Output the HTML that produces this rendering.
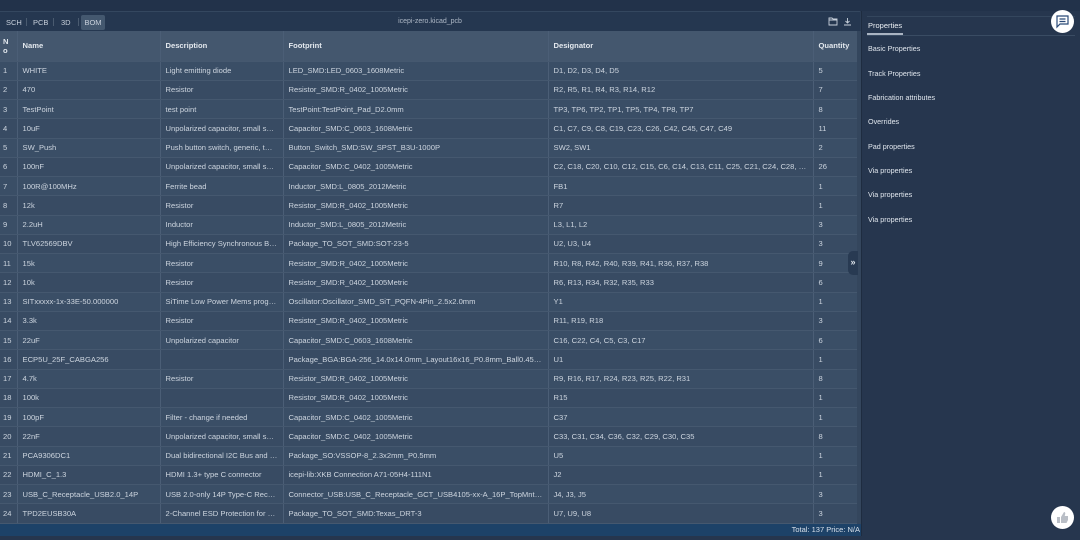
<!DOCTYPE html>
<html><head><meta charset="utf-8"><style>
*{margin:0;padding:0;box-sizing:border-box}
body{width:1080px;height:540px;background:#26364e;font-family:"Liberation Sans",sans-serif;overflow:hidden;position:relative;color:#c9d1dc}
#main{position:absolute;left:0;top:11px;width:862px;height:525px;background:#2b3c54;border-right:1px solid #1e2c40;overflow:hidden}
#tb{position:absolute;left:0;top:0;width:860px;height:20px;background:#253750;border-top:1px solid #34475f}
.tab{position:absolute;top:3px;height:15px;font-size:7.5px;line-height:15px;color:#c9d1dc}
#title{position:absolute;left:0;width:860px;top:0;text-align:center;font-size:7px;line-height:20px;color:#aeb8c6}
#tw{position:absolute;left:0;top:20px;width:857px;height:493px;overflow:hidden;background:#384b63}
table{border-collapse:collapse;table-layout:fixed;width:857px}
td,th{font-size:7.6px;color:#cdd5df;padding:0 5px;height:19.25px;white-space:nowrap;overflow:hidden;text-overflow:ellipsis;border-right:1px solid #4b5e76;border-bottom:1px solid #45586f;text-align:left}
th{height:30px;background:#44576e;font-weight:bold;color:#e3e8ee;font-size:7.6px}
td:first-child,th:first-child{padding:0 3px}
tr:nth-child(odd) td{background:#384b63}
tr:nth-child(even) td{background:#3a4e66}
#sb{position:absolute;left:857px;top:20px;width:4px;height:493px;background:#34465d}
#foot{position:absolute;left:0;top:513px;width:862px;height:12px;background:#1d4268;font-size:7.5px;color:#d8e0ea;text-align:right;padding-right:2px;line-height:12px}
#right{position:absolute;left:862px;top:11px;width:218px}
.pi{position:absolute;left:6px;font-size:7.2px;color:#e1e7ee}
</style></head><body>
<div style="position:absolute;left:0;top:0;width:1080px;height:11px;background:#22324a"></div>
<div id="main">
<div id="tb">
<span class="tab" style="left:6px">SCH</span>
<span style="position:absolute;left:26px;top:6px;width:1px;height:8px;background:#4a5b70"></span>
<span class="tab" style="left:33px">PCB</span>
<span style="position:absolute;left:53px;top:6px;width:1px;height:8px;background:#4a5b70"></span>
<span class="tab" style="left:61px">3D</span>
<span style="position:absolute;left:78px;top:6px;width:1px;height:8px;background:#4a5b70"></span>
<span class="tab" style="left:81px;width:24px;background:#44586f;border-radius:2px;text-align:center">BOM</span>
<div id="title">icepi-zero.kicad_pcb</div>
<svg style="position:absolute;left:828px;top:5px" width="10" height="9" viewBox="0 0 10 9"><path d="M1 1h3l1 1h4v6H1z M1 3h8" fill="none" stroke="#c9d1dc" stroke-width="0.9"/></svg>
<svg style="position:absolute;left:843px;top:5px" width="9" height="9" viewBox="0 0 9 9"><path d="M4.5 1v5M2.5 4l2 2 2-2M1 8h7" fill="none" stroke="#c9d1dc" stroke-width="0.9"/></svg>
</div>
<div id="tw">
<table>
<colgroup><col style="width:17px"><col style="width:143px"><col style="width:123px"><col style="width:265px"><col style="width:265px"><col style="width:44px"></colgroup>
<tr><th style="line-height:9px">N<br>o</th><th>Name</th><th>Description</th><th>Footprint</th><th>Designator</th><th>Quantity</th></tr>
<tr><td>1</td><td>WHITE</td><td>Light emitting diode</td><td>LED_SMD:LED_0603_1608Metric</td><td>D1, D2, D3, D4, D5</td><td>5</td></tr>
<tr><td>2</td><td>470</td><td>Resistor</td><td>Resistor_SMD:R_0402_1005Metric</td><td>R2, R5, R1, R4, R3, R14, R12</td><td>7</td></tr>
<tr><td>3</td><td>TestPoint</td><td>test point</td><td>TestPoint:TestPoint_Pad_D2.0mm</td><td>TP3, TP6, TP2, TP1, TP5, TP4, TP8, TP7</td><td>8</td></tr>
<tr><td>4</td><td>10uF</td><td>Unpolarized capacitor, small symbol</td><td>Capacitor_SMD:C_0603_1608Metric</td><td>C1, C7, C9, C8, C19, C23, C26, C42, C45, C47, C49</td><td>11</td></tr>
<tr><td>5</td><td>SW_Push</td><td>Push button switch, generic, two pins</td><td>Button_Switch_SMD:SW_SPST_B3U-1000P</td><td>SW2, SW1</td><td>2</td></tr>
<tr><td>6</td><td>100nF</td><td>Unpolarized capacitor, small symbol</td><td>Capacitor_SMD:C_0402_1005Metric</td><td>C2, C18, C20, C10, C12, C15, C6, C14, C13, C11, C25, C21, C24, C28, C27, C38, C40</td><td>26</td></tr>
<tr><td>7</td><td>100R@100MHz</td><td>Ferrite bead</td><td>Inductor_SMD:L_0805_2012Metric</td><td>FB1</td><td>1</td></tr>
<tr><td>8</td><td>12k</td><td>Resistor</td><td>Resistor_SMD:R_0402_1005Metric</td><td>R7</td><td>1</td></tr>
<tr><td>9</td><td>2.2uH</td><td>Inductor</td><td>Inductor_SMD:L_0805_2012Metric</td><td>L3, L1, L2</td><td>3</td></tr>
<tr><td>10</td><td>TLV62569DBV</td><td>High Efficiency Synchronous Buck Converter</td><td>Package_TO_SOT_SMD:SOT-23-5</td><td>U2, U3, U4</td><td>3</td></tr>
<tr><td>11</td><td>15k</td><td>Resistor</td><td>Resistor_SMD:R_0402_1005Metric</td><td>R10, R8, R42, R40, R39, R41, R36, R37, R38</td><td>9</td></tr>
<tr><td>12</td><td>10k</td><td>Resistor</td><td>Resistor_SMD:R_0402_1005Metric</td><td>R6, R13, R34, R32, R35, R33</td><td>6</td></tr>
<tr><td>13</td><td>SITxxxxx-1x-33E-50.000000</td><td>SiTime Low Power Mems programmable</td><td>Oscillator:Oscillator_SMD_SiT_PQFN-4Pin_2.5x2.0mm</td><td>Y1</td><td>1</td></tr>
<tr><td>14</td><td>3.3k</td><td>Resistor</td><td>Resistor_SMD:R_0402_1005Metric</td><td>R11, R19, R18</td><td>3</td></tr>
<tr><td>15</td><td>22uF</td><td>Unpolarized capacitor</td><td>Capacitor_SMD:C_0603_1608Metric</td><td>C16, C22, C4, C5, C3, C17</td><td>6</td></tr>
<tr><td>16</td><td>ECP5U_25F_CABGA256</td><td></td><td>Package_BGA:BGA-256_14.0x14.0mm_Layout16x16_P0.8mm_Ball0.45mm_Pad0.32mm</td><td>U1</td><td>1</td></tr>
<tr><td>17</td><td>4.7k</td><td>Resistor</td><td>Resistor_SMD:R_0402_1005Metric</td><td>R9, R16, R17, R24, R23, R25, R22, R31</td><td>8</td></tr>
<tr><td>18</td><td>100k</td><td></td><td>Resistor_SMD:R_0402_1005Metric</td><td>R15</td><td>1</td></tr>
<tr><td>19</td><td>100pF</td><td>Filter - change if needed</td><td>Capacitor_SMD:C_0402_1005Metric</td><td>C37</td><td>1</td></tr>
<tr><td>20</td><td>22nF</td><td>Unpolarized capacitor, small symbol</td><td>Capacitor_SMD:C_0402_1005Metric</td><td>C33, C31, C34, C36, C32, C29, C30, C35</td><td>8</td></tr>
<tr><td>21</td><td>PCA9306DC1</td><td>Dual bidirectional I2C Bus and SMBus</td><td>Package_SO:VSSOP-8_2.3x2mm_P0.5mm</td><td>U5</td><td>1</td></tr>
<tr><td>22</td><td>HDMI_C_1.3</td><td>HDMI 1.3+ type C connector</td><td>icepi-lib:XKB Connection A71-05H4-111N1</td><td>J2</td><td>1</td></tr>
<tr><td>23</td><td>USB_C_Receptacle_USB2.0_14P</td><td>USB 2.0-only 14P Type-C Receptacle</td><td>Connector_USB:USB_C_Receptacle_GCT_USB4105-xx-A_16P_TopMnt_Horizontal</td><td>J4, J3, J5</td><td>3</td></tr>
<tr><td>24</td><td>TPD2EUSB30A</td><td>2-Channel ESD Protection for SuperSpeed</td><td>Package_TO_SOT_SMD:Texas_DRT-3</td><td>U7, U9, U8</td><td>3</td></tr>
<tr><td></td><td></td><td></td><td></td><td></td><td></td></tr>
</table>
</div>
<div id="sb"></div>
<div style="position:absolute;left:848px;top:240px;width:10px;height:24px;background:#283a52;border-radius:5px 0 0 5px;color:#dfe5ec;font-size:9px;line-height:22px;text-align:center;font-weight:bold">»</div>
<div id="foot">Total: 137 Price: N/A</div>
</div>
<div id="right">
<div style="position:absolute;left:5px;top:5px;width:208px;height:1px;background:#34465d"></div>
<div class="pi" style="top:10px;font-size:7.5px;color:#eef2f6">Properties</div>
<div style="position:absolute;left:5px;top:22px;width:36px;height:2px;background:#aab4c2"></div>
<div style="position:absolute;left:5px;top:24px;width:208px;height:1px;background:#3a4c63"></div>
<div class="pi" style="top:33px">Basic Properties</div>
<div class="pi" style="top:58px">Track Properties</div>
<div class="pi" style="top:82px">Fabrication attributes</div>
<div class="pi" style="top:106px">Overrides</div>
<div class="pi" style="top:131px">Pad properties</div>
<div class="pi" style="top:155px">Via properties</div>
<div class="pi" style="top:179px">Via properties</div>
<div class="pi" style="top:204px">Via properties</div>
</div>
<div style="position:absolute;left:1051px;top:10px;width:23px;height:23px;border-radius:50%;background:#fff"></div>
<svg style="position:absolute;left:1055px;top:14px" width="15" height="15" viewBox="0 0 15 15"><path d="M2 2h11v8H5l-3 3z M4.5 5h6M4.5 7.5h6" fill="none" stroke="#2b4a78" stroke-width="1.2"/></svg>
<div style="position:absolute;left:1051px;top:506px;width:23px;height:23px;border-radius:50%;background:#fff"></div>
<svg style="position:absolute;left:1055px;top:510px" width="15" height="15" viewBox="0 0 15 15"><path d="M2 7h3v6H2z M6 7l3-5c1 0 1.5 1 1.2 2l-.5 2H13v4l-1.5 3H6z" fill="#b9bec6"/></svg>
</body></html>
